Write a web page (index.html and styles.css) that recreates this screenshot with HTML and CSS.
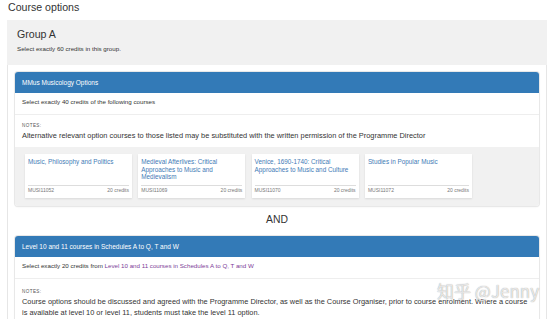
FILE: index.html
```html
<!DOCTYPE html>
<html lang="en">
<head>
  <meta charset="UTF-8" />
  <meta name="viewport" content="width=device-width, initial-scale=1.0" />
  <title>Course options</title>
  <link rel="stylesheet" href="styles.css">
</head>
<body>
  <h1 class="page-title">Course options</h1>

  <div class="group">
    <div class="group-head">
      <h2>Group A</h2>
      <p>Select exactly 60 credits in this group.</p>
    </div>

    <div class="group-body">
      <!-- First block of options -->
      <div class="panel">
        <div class="panel-head">MMus Musicology Options</div>
        <div class="panel-rule">Select exactly 40 credits of the following courses</div>
        <div class="panel-notes">
          <div class="notes-label">Notes:</div>
          <p>Alternative relevant option courses to those listed may be substituted with the written permission of the Programme Director</p>
        </div>
        <div class="course-list">
          <div class="course">
            <a class="course-title" href="#">Music, Philosophy and Politics</a>
            <div class="course-meta"><span>MUSI11052</span><span>20 credits</span></div>
          </div>
          <div class="course">
            <a class="course-title" href="#">Medieval Afterlives: Critical Approaches to Music and Medievalism</a>
            <div class="course-meta"><span>MUSI11069</span><span>20 credits</span></div>
          </div>
          <div class="course">
            <a class="course-title" href="#">Venice, 1690-1740: Critical Approaches to Music and Culture</a>
            <div class="course-meta"><span>MUSI11070</span><span>20 credits</span></div>
          </div>
          <div class="course">
            <a class="course-title" href="#">Studies in Popular Music</a>
            <div class="course-meta"><span>MUSI11072</span><span>20 credits</span></div>
          </div>
        </div>
      </div>

      <div class="and">AND</div>

      <!-- Second block of options -->
      <div class="panel">
        <div class="panel-head">Level 10 and 11 courses in Schedules A to Q, T and W</div>
        <div class="panel-rule">Select exactly 20 credits from <a class="visited" href="#">Level 10 and 11 courses in Schedules A to Q, T and W</a></div>
        <div class="panel-notes notes-wide">
          <div class="notes-label">Notes:</div>
          <p>Course options should be discussed and agreed with the Programme Director, as well as the Course Organiser, prior to course enrolment. Where a course is available at level 10 or level 11, students must take the level 11 option.</p>
        </div>
      </div>
    </div>
  </div>

  <div class="watermark">知乎 @Jenny</div>
</body>
</html>
```

FILE: styles.css
```css
html, body {
  margin: 0;
  padding: 0;
  height: 100%;
  overflow: hidden;
  background: #fff;
  color: #333;
  font-family: "Liberation Sans", Arial, sans-serif;
}

body {
  position: relative;
}

.page-title {
  margin: 0 0 6px 0;
  padding-left: 8px;
  font-size: 10.6px;
  font-weight: normal;
  line-height: 14px;
}

.group {
  margin: 0 7px;
  border: 1px solid #e6e6e6;
  border-bottom: none;
  min-height: 400px;
}

.group-head {
  margin: -1px -1px 0 -1px;
  padding: 8px 10px 12px 10px;
  background: #f1f1f1;
}

.group-head h2 {
  margin: 0;
  font-size: 10.6px;
  font-weight: normal;
  line-height: 12px;
}

.group-head p {
  margin: 5px 0 0 0;
  font-size: 6.2px;
  line-height: 8px;
}

.group-body {
  padding: 7px;
}

.panel {
  background: #fff;
  border-radius: 3px;
  box-shadow: 0 0 0 1px #e8e8e8, 0 1px 2px rgba(0, 0, 0, 0.08);
}

.panel-head {
  height: 21px;
  padding: 0 7px;
  background: #337ab7;
  color: #fff;
  font-size: 6.5px;
  line-height: 21px;
  border-radius: 3px 3px 0 0;
}

.panel-rule {
  padding: 5px 7px 8px 7px;
  font-size: 6.2px;
  line-height: 8px;
  border-bottom: 1px solid #eee;
}

.panel-rule a.visited {
  color: #7d3c98;
  text-decoration: none;
}

.panel-notes {
  padding: 6px 6px 6px 7px;
}

.notes-wide {
  padding-top: 8px;
}

.notes-label {
  font-size: 4.6px;
  line-height: 9px;
  text-transform: uppercase;
  letter-spacing: 0.4px;
  color: #555;
}

.panel-notes p {
  margin: 0;
  font-size: 7.4px;
  line-height: 11px;
}

.course-list {
  display: flex;
  gap: 6.3px;
  padding: 7px 10px 8px 10px;
  background: #f1f1f1;
  border-radius: 0 0 3px 3px;
}

.course {
  display: flex;
  flex-direction: column;
  width: 107px;
  padding-top: 4px;
  background: #fff;
  box-shadow: 0 1px 2px rgba(0, 0, 0, 0.1);
}

.course-title {
  display: block;
  min-height: 27px;
  padding: 0 3px;
  color: #3f7bb6;
  font-size: 6.35px;
  line-height: 7.5px;
  text-decoration: none;
}

.course-meta {
  display: flex;
  justify-content: space-between;
  margin: 0 3px;
  padding-bottom: 4px;
  border-top: 1px solid #ddd;
  color: #777;
  font-size: 5px;
  line-height: 8px;
}

.and {
  padding: 7px 0 9px 0;
  text-align: center;
  font-size: 10.4px;
  line-height: 14px;
}

.watermark {
  position: absolute;
  left: 437px;
  top: 281px;
  font-family: "Noto Sans CJK SC", sans-serif;
  font-size: 17px;
  line-height: 20px;
  color: rgba(255, 255, 255, 0.75);
  text-shadow: 0 0 1px rgba(0, 0, 0, 0.45);
  pointer-events: none;
}
```
